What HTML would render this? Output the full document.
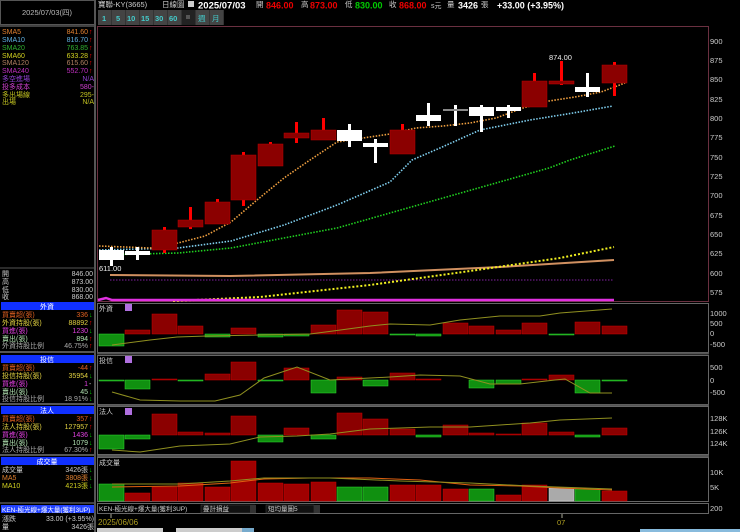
<!DOCTYPE html>
<html><head><meta charset="utf-8"><style>
html,body{margin:0;padding:0;background:#000;}
svg{display:block;font-family:"Liberation Sans","Noto Sans CJK TC",sans-serif;}
</style></head><body>
<svg width="740" height="532" viewBox="0 0 740 532" xmlns="http://www.w3.org/2000/svg">
<rect width="740" height="532" fill="#000"/>
<rect x="0.5" y="0.5" width="94" height="24" fill="none" stroke="#555"/>
<text x="47" y="15" font-size="7.5" fill="#bbb" text-anchor="middle">2025/07/03(四)</text>
<line x1="95" y1="0" x2="95" y2="532" stroke="#555" stroke-width="2"/>
<line x1="0" y1="26" x2="95" y2="26" stroke="#555" stroke-width="1.5"/>
<g font-size="7" >
<text x="2" y="34" fill="#e08030">SMA5</text><text x="88" y="34" fill="#e08030" text-anchor="end">841.60</text>
<text x="2" y="42" fill="#60b0e0">SMA10</text><text x="88" y="42" fill="#60b0e0" text-anchor="end">816.70</text>
<text x="2" y="50" fill="#30b030">SMA20</text><text x="88" y="50" fill="#30b030" text-anchor="end">763.85</text>
<text x="2" y="58" fill="#d0d020">SMA60</text><text x="88" y="58" fill="#d0d020" text-anchor="end">633.28</text>
<text x="2" y="65" fill="#b08060">SMA120</text><text x="88" y="65" fill="#b08060" text-anchor="end">615.60</text>
<text x="2" y="73" fill="#c030c0">SMA240</text><text x="88" y="73" fill="#c030c0" text-anchor="end">552.70</text>
<text x="2" y="81" fill="#9040d0">多空進場</text><text x="94" y="81" fill="#9040d0" text-anchor="end">N/A</text>
<text x="2" y="89" fill="#d040d0">投多成本</text><text x="94" y="89" fill="#d040d0" text-anchor="end">580-</text>
<text x="2" y="97" fill="#c0c020">多出場線</text><text x="94" y="97" fill="#c0c020" text-anchor="end">295-</text>
<text x="2" y="104" fill="#c0c020">出場</text><text x="94" y="104" fill="#c0c020" text-anchor="end">N/A</text>
</g>
<g fill="#f00" font-size="7"><text x="89" y="34">↑</text><text x="89" y="42">↑</text><text x="89" y="50">↑</text><text x="89" y="58">↑</text><text x="89" y="65">↑</text><text x="89" y="73">↑</text></g>
<line x1="0" y1="268" x2="95" y2="268" stroke="#555"/>
<g font-size="7" fill="#ccc">
<text x="2" y="276">開</text><text x="93" y="276" text-anchor="end">846.00</text>
<text x="2" y="284">高</text><text x="93" y="284" text-anchor="end">873.00</text>
<text x="2" y="292">低</text><text x="93" y="292" text-anchor="end">830.00</text>
<text x="2" y="299">收</text><text x="93" y="299" text-anchor="end">868.00</text>
</g>
<g font-size="7">
<rect x="1" y="302" width="93" height="8" fill="#1030ff"/><text x="47" y="309" fill="#fff" text-anchor="middle">外資</text>
<text x="2" y="317" fill="#e06020">買賣超(張)</text><text x="88" y="317" fill="#e06020" text-anchor="end">336</text><text x="89" y="317" fill="#0c0">↓</text>
<text x="2" y="325" fill="#e0d040">外資持股(張)</text><text x="88" y="325" fill="#e0d040" text-anchor="end">88892</text><text x="89" y="325" fill="#f00">↑</text>
<text x="2" y="333" fill="#e040e0">買進(張)</text><text x="88" y="333" fill="#e040e0" text-anchor="end">1230</text><text x="89" y="333" fill="#0c0">↓</text>
<text x="2" y="341" fill="#b0e0b0">賣出(張)</text><text x="88" y="341" fill="#b0e0b0" text-anchor="end">894</text><text x="89" y="341" fill="#f00">↑</text>
<text x="2" y="348" fill="#aaa">外資持股比例</text><text x="88" y="348" fill="#aaa" text-anchor="end">46.75%</text><text x="89" y="348" fill="#f00">↑</text>
<line x1="0" y1="352" x2="95" y2="352" stroke="#555" stroke-width="2"/>
<rect x="1" y="355" width="93" height="8" fill="#1030ff"/><text x="47" y="362" fill="#fff" text-anchor="middle">投信</text>
<text x="2" y="370" fill="#e06020">買賣超(張)</text><text x="88" y="370" fill="#e06020" text-anchor="end">-44</text><text x="89" y="370" fill="#f00">↑</text>
<text x="2" y="378" fill="#e0d040">投信持股(張)</text><text x="88" y="378" fill="#e0d040" text-anchor="end">35954</text><text x="89" y="378" fill="#0c0">↓</text>
<text x="2" y="386" fill="#e040e0">買進(張)</text><text x="88" y="386" fill="#e040e0" text-anchor="end">1</text><text x="89" y="386" fill="#ccc">-</text>
<text x="2" y="394" fill="#b0e0b0">賣出(張)</text><text x="88" y="394" fill="#b0e0b0" text-anchor="end">45</text><text x="89" y="394" fill="#0c0">↓</text>
<text x="2" y="401" fill="#aaa">投信持股比例</text><text x="88" y="401" fill="#aaa" text-anchor="end">18.91%</text><text x="89" y="401" fill="#0c0">↓</text>
<line x1="0" y1="404" x2="95" y2="404" stroke="#555" stroke-width="2"/>
<rect x="1" y="406" width="93" height="8" fill="#1030ff"/><text x="47" y="413" fill="#fff" text-anchor="middle">法人</text>
<text x="2" y="421" fill="#e06020">買賣超(張)</text><text x="88" y="421" fill="#e06020" text-anchor="end">357</text><text x="89" y="421" fill="#f00">↑</text>
<text x="2" y="429" fill="#e0d040">法人持股(張)</text><text x="88" y="429" fill="#e0d040" text-anchor="end">127957</text><text x="89" y="429" fill="#f00">↑</text>
<text x="2" y="437" fill="#e040e0">買進(張)</text><text x="88" y="437" fill="#e040e0" text-anchor="end">1436</text><text x="89" y="437" fill="#0c0">↓</text>
<text x="2" y="445" fill="#b0e0b0">賣出(張)</text><text x="88" y="445" fill="#b0e0b0" text-anchor="end">1079</text><text x="89" y="445" fill="#0c0">↓</text>
<text x="2" y="452" fill="#aaa">法人持股比例</text><text x="88" y="452" fill="#aaa" text-anchor="end">67.30%</text><text x="89" y="452" fill="#f00">↑</text>
<line x1="0" y1="455" x2="95" y2="455" stroke="#555" stroke-width="2"/>
<rect x="1" y="457" width="93" height="8" fill="#1030ff"/><text x="47" y="464" fill="#fff" text-anchor="middle">成交量</text>
<text x="2" y="472" fill="#ccc">成交量</text><text x="88" y="472" fill="#ccc" text-anchor="end">3426張</text><text x="89" y="472" fill="#0c0">↓</text>
<text x="2" y="480" fill="#e08030">MA5</text><text x="88" y="480" fill="#e08030" text-anchor="end">3808張</text><text x="89" y="480" fill="#0c0">↓</text>
<text x="2" y="488" fill="#d0d020">MA10</text><text x="88" y="488" fill="#d0d020" text-anchor="end">4213張</text><text x="89" y="488" fill="#0c0">↓</text>
<line x1="0" y1="503" x2="95" y2="503" stroke="#555" stroke-width="1.5"/>
<rect x="1" y="505" width="93" height="8" fill="#2040ff"/><text x="2" y="512" fill="#fff" font-size="6.5">KEN-極光線+爆大量(獲利3UP)</text>
<text x="2" y="521" fill="#ccc">漲跌</text><text x="94" y="521" fill="#ccc" text-anchor="end">33.00 (+3.95%)</text>
<text x="2" y="529" fill="#ccc">量</text><text x="94" y="529" fill="#ccc" text-anchor="end">3426張</text>
</g>
<g font-size="7.5">
<text x="98" y="7" fill="#ccc">寶聯-KY(3665)</text>
<text x="162" y="7" fill="#ccc">日線圖</text>
<rect x="188" y="1" width="6" height="6" fill="#ccc"/>
<text x="198" y="8.5" fill="#fff" font-weight="bold" font-size="9.5">2025/07/03</text>
<text x="256" y="7" fill="#ccc">開</text><text x="266" y="8.5" fill="#e00" font-weight="bold" font-size="9">846.00</text>
<text x="301" y="7" fill="#ccc">高</text><text x="310" y="8.5" fill="#e00" font-weight="bold" font-size="9">873.00</text>
<text x="345" y="7" fill="#ccc">低</text><text x="355" y="8.5" fill="#0c0" font-weight="bold" font-size="9">830.00</text>
<text x="389" y="7" fill="#ccc">收</text><text x="399" y="8.5" fill="#e00" font-weight="bold" font-size="9">868.00</text>
<text x="431" y="8" fill="#ccc" font-size="7">s元</text>
<text x="447" y="7" fill="#ccc">量</text><text x="458" y="8.5" fill="#fff" font-weight="bold" font-size="9">3426</text><text x="481" y="7" fill="#ccc">張</text>
<text x="497" y="8.5" fill="#fff" font-weight="bold" font-size="9">+33.00 (+3.95%)</text>
</g>
<g font-size="7.5" font-weight="bold" fill="#4cc">
<rect x="98" y="10" width="126" height="15" fill="#333"/>
<rect x="98" y="10" width="13" height="15" fill="#444"/><text x="102" y="21">1</text>
<rect x="112" y="10" width="13" height="15" fill="#444"/><text x="116" y="21">5</text>
<rect x="126" y="10" width="13" height="15" fill="#444"/><text x="127" y="21">10</text>
<rect x="140" y="10" width="13" height="15" fill="#444"/><text x="141" y="21">15</text>
<rect x="154" y="10" width="13" height="15" fill="#444"/><text x="155" y="21">30</text>
<rect x="168" y="10" width="13" height="15" fill="#444"/><text x="169" y="21">60</text>
<rect x="182" y="10" width="13" height="15" fill="#222"/><rect x="186" y="15" width="4" height="4" fill="#555"/>
<rect x="196" y="10" width="13" height="15" fill="#444"/><text x="198" y="21" font-weight="normal">週</text>
<rect x="210" y="10" width="13" height="15" fill="#444"/><text x="212" y="21" font-weight="normal">月</text>
</g>
<rect x="97.5" y="26.5" width="611" height="275" fill="none" stroke="#6a3040"/>
<g font-size="7.5" fill="#ccc">
<text x="710" y="44">900</text><text x="710" y="63">875</text><text x="710" y="82">850</text><text x="710" y="102">825</text><text x="710" y="121">800</text><text x="710" y="140">775</text><text x="710" y="160">750</text><text x="710" y="179">725</text><text x="710" y="198">700</text><text x="710" y="218">675</text><text x="710" y="237">650</text><text x="710" y="256">625</text><text x="710" y="276">600</text><text x="710" y="295">575</text>
</g>
<line x1="110" y1="280" x2="614" y2="280" stroke="#8020a0" stroke-width="1" stroke-dasharray="1.5,1.5"/>
<path d="M110 275 L230 276 L370 273 L500 267 L614 260" fill="none" stroke="#d09060" stroke-width="2"/>
<path d="M173 301 L260 297 L370 285 L470 271 L560 258 L614 247" fill="none" stroke="#f0f020" stroke-width="2" stroke-dasharray="2,2"/>
<path d="M98 300 L106 298 L112 300 L614 300" fill="none" stroke="#e030e0" stroke-width="2.5"/>
<path d="M99 255 L178 253 L231 248 L284 238 L337 228 L390 213 L443 198 L496 183 L549 168 L570 160 L615 146" fill="none" stroke="#20d020" stroke-width="1.6" stroke-dasharray="1.5,1.5"/>
<path d="M99 250 L178 248 L231 241 L284 225 L337 205 L390 182 L412 160 L440 148 L480 130 L530 120 L573 113 L613 106" fill="none" stroke="#80d0f0" stroke-width="1.6" stroke-dasharray="1.5,1.5"/>
<path d="M99 246 L150 248 L178 243 L205 236 L231 222 L257 200 L284 178 L310 160 L337 142 L363 138 L390 134 L416 128 L443 126 L470 123 L496 118 L523 108 L549 101 L575 97 L601 92 L625 83" fill="none" stroke="#f0a040" stroke-width="1.6" stroke-dasharray="1.5,1.5"/>
<g>
<rect x="110" y="247" width="3" height="19" fill="#fff"/><rect x="99" y="250" width="25" height="10" fill="#fff"/>
<rect x="136" y="247" width="3" height="13" fill="#fff"/><rect x="125" y="251" width="25" height="4" fill="#fff"/>
<rect x="163" y="227" width="3" height="26" fill="#f00"/><rect x="152" y="230" width="25" height="20" fill="#8b0000" stroke="#b00" stroke-width=".5"/>
<rect x="189" y="207" width="3" height="22" fill="#f00"/><rect x="178" y="220" width="25" height="7" fill="#8b0000" stroke="#b00" stroke-width=".5"/>
<rect x="216" y="199" width="3" height="25" fill="#f00"/><rect x="205" y="202" width="25" height="22" fill="#8b0000" stroke="#b00" stroke-width=".5"/>
<rect x="242" y="152" width="3" height="54" fill="#f00"/><rect x="231" y="155" width="25" height="45" fill="#8b0000" stroke="#b00" stroke-width=".5"/>
<rect x="269" y="142" width="3" height="24" fill="#f00"/><rect x="258" y="144" width="25" height="22" fill="#8b0000" stroke="#b00" stroke-width=".5"/>
<rect x="295" y="122" width="3" height="21" fill="#f00"/><rect x="284" y="133" width="25" height="5" fill="#8b0000" stroke="#b00" stroke-width=".5"/>
<rect x="322" y="118" width="3" height="22" fill="#f00"/><rect x="311" y="130" width="25" height="10" fill="#8b0000" stroke="#b00" stroke-width=".5"/>
<rect x="348" y="124" width="3" height="23" fill="#fff"/><rect x="337" y="130" width="25" height="11" fill="#fff"/>
<rect x="374" y="139" width="3" height="24" fill="#fff"/><rect x="363" y="143" width="25" height="4" fill="#fff"/>
<rect x="401" y="124" width="3" height="30" fill="#f00"/><rect x="390" y="130" width="25" height="24" fill="#8b0000" stroke="#b00" stroke-width=".5"/>
<rect x="427" y="103" width="3" height="23" fill="#fff"/><rect x="416" y="115" width="25" height="6" fill="#fff"/>
<rect x="454" y="105" width="3" height="21" fill="#fff"/><rect x="443" y="109" width="25" height="2" fill="#888"/>
<rect x="480" y="105" width="3" height="27" fill="#fff"/><rect x="469" y="107" width="25" height="9" fill="#fff"/>
<rect x="507" y="105" width="3" height="13" fill="#fff"/><rect x="496" y="107" width="25" height="4" fill="#fff"/>
<rect x="533" y="73" width="3" height="34" fill="#f00"/><rect x="522" y="81" width="25" height="26" fill="#8b0000" stroke="#b00" stroke-width=".5"/>
<rect x="560" y="61" width="3" height="24" fill="#f00"/><rect x="549" y="81" width="25" height="3" fill="#8b0000" stroke="#c00" stroke-width=".5"/>
<rect x="586" y="73" width="3" height="24" fill="#fff"/><rect x="575" y="87" width="25" height="5" fill="#fff"/>
<rect x="613" y="62" width="3" height="34" fill="#f00"/><rect x="602" y="65" width="25" height="18" fill="#8b0000" stroke="#b00" stroke-width=".5"/>
</g>
<text x="549" y="60" font-size="7.5" fill="#eee">874.00</text>
<text x="99" y="271" font-size="7.5" fill="#eee">611.00</text>

<rect x="97.5" y="303.5" width="611" height="49" fill="none" stroke="#666"/>
<line x1="97" y1="353.5" x2="709" y2="353.5" stroke="#555" stroke-width="2"/>
<text x="99" y="311" font-size="7" fill="#ccc">外資</text><rect x="125" y="304" width="7" height="7" fill="#b070e0"/>
<g fill="#8b0000" stroke="#c00" stroke-width=".5">
<rect x="125" y="330" width="25" height="4"/><rect x="152" y="314" width="25" height="20"/><rect x="178" y="326" width="25" height="8"/>
<rect x="231" y="328" width="25" height="6"/><rect x="311" y="325" width="25" height="9"/><rect x="337" y="310" width="25" height="24"/>
<rect x="363" y="312" width="25" height="22"/><rect x="443" y="323" width="25" height="11"/><rect x="469" y="326" width="25" height="8"/>
<rect x="496" y="330" width="25" height="4"/><rect x="522" y="323" width="25" height="11"/><rect x="575" y="322" width="25" height="12"/><rect x="602" y="326" width="25" height="8"/>
</g>
<g fill="#109010" stroke="#3d3" stroke-width=".5">
<rect x="99" y="334" width="25" height="12"/><rect x="205" y="334" width="25" height="3"/><rect x="258" y="334" width="25" height="3"/>
<rect x="284" y="334" width="25" height="2"/><rect x="390" y="334" width="25" height="1"/><rect x="416" y="334" width="25" height="2"/><rect x="549" y="334" width="25" height="1"/>
</g>
<path d="M112 345 L150 340 L177 337 L207 336 L310 334 L333 331 L370 326 L390 324 L430 325 L460 320 L500 316 L540 316 L560 313 L612 309" fill="none" stroke="#909020" stroke-width="1"/>
<g font-size="7.5" fill="#ccc"><text x="710" y="316">1000</text><text x="710" y="326">500</text><text x="710" y="336">0</text><text x="710" y="347">-500</text></g>

<rect x="97.5" y="355.5" width="611" height="49" fill="none" stroke="#666"/>
<line x1="97" y1="405.5" x2="709" y2="405.5" stroke="#555" stroke-width="2"/>
<text x="99" y="363" font-size="7" fill="#ccc">投信</text><rect x="125" y="356" width="7" height="7" fill="#b070e0"/>
<g fill="#8b0000" stroke="#c00" stroke-width=".5">
<rect x="152" y="379" width="25" height="1"/><rect x="205" y="374" width="25" height="6"/><rect x="231" y="362" width="25" height="18"/>
<rect x="284" y="368" width="25" height="12"/><rect x="337" y="377" width="25" height="3"/><rect x="390" y="373" width="25" height="7"/>
<rect x="416" y="379" width="25" height="1"/><rect x="522" y="379" width="25" height="1"/><rect x="549" y="375" width="25" height="5"/>
</g>
<g fill="#109010" stroke="#3d3" stroke-width=".5">
<rect x="99" y="380" width="25" height="1"/><rect x="125" y="380" width="25" height="9"/><rect x="178" y="380" width="25" height="1"/>
<rect x="258" y="380" width="25" height="1"/><rect x="311" y="380" width="25" height="13"/><rect x="363" y="380" width="25" height="6"/>
<rect x="469" y="380" width="25" height="8"/><rect x="496" y="380" width="25" height="4"/><rect x="575" y="380" width="25" height="13"/><rect x="602" y="380" width="25" height="1"/>
</g>
<path d="M112 392 L140 400 L180 401 L215 401 L240 395 L264 378 L297 367 L330 380 L370 378 L390 377 L420 375 L460 376 L490 384 L520 384 L555 380 L565 379 L590 393 L612 393" fill="none" stroke="#909020" stroke-width="1"/>
<g font-size="7.5" fill="#ccc"><text x="710" y="370">500</text><text x="710" y="383">0</text><text x="710" y="395">-500</text></g>

<rect x="97.5" y="406.5" width="611" height="48" fill="none" stroke="#666"/>
<line x1="97" y1="456" x2="709" y2="456" stroke="#555" stroke-width="2"/>
<text x="99" y="414" font-size="7" fill="#ccc">法人</text><rect x="125" y="408" width="7" height="7" fill="#b070e0"/>
<g fill="#8b0000" stroke="#c00" stroke-width=".5">
<rect x="152" y="414" width="25" height="21"/><rect x="178" y="432" width="25" height="3"/><rect x="205" y="433" width="25" height="2"/>
<rect x="231" y="416" width="25" height="19"/><rect x="284" y="428" width="25" height="7"/><rect x="337" y="413" width="25" height="22"/>
<rect x="363" y="419" width="25" height="16"/><rect x="390" y="429" width="25" height="6"/><rect x="443" y="425" width="25" height="10"/>
<rect x="469" y="433" width="25" height="2"/><rect x="496" y="434" width="25" height="1"/><rect x="522" y="423" width="25" height="12"/>
<rect x="549" y="432" width="25" height="3"/><rect x="602" y="428" width="25" height="7"/>
</g>
<g fill="#109010" stroke="#3d3" stroke-width=".5">
<rect x="99" y="435" width="25" height="14"/><rect x="125" y="435" width="25" height="4"/><rect x="258" y="435" width="25" height="7"/>
<rect x="311" y="435" width="25" height="4"/><rect x="416" y="435" width="25" height="2"/><rect x="575" y="435" width="25" height="2"/>
</g>
<path d="M112 450 L140 452 L180 446 L230 444 L260 437 L297 436 L330 434 L370 429 L400 428 L430 427 L470 427 L500 425 L530 423 L560 420 L612 418" fill="none" stroke="#909020" stroke-width="1"/>
<g font-size="7.5" fill="#ccc"><text x="710" y="421">128K</text><text x="710" y="434">126K</text><text x="710" y="446">124K</text></g>

<rect x="97.5" y="457.5" width="611" height="44" fill="none" stroke="#666"/>
<text x="99" y="465" font-size="7" fill="#ccc">成交量</text>
<g fill="#a00000" stroke="#c00" stroke-width=".5">
<rect x="125" y="493" width="25" height="8"/><rect x="152" y="487" width="25" height="14"/><rect x="178" y="483" width="25" height="18"/>
<rect x="205" y="487" width="25" height="14"/><rect x="231" y="461" width="25" height="40"/><rect x="258" y="483" width="25" height="18"/>
<rect x="284" y="484" width="25" height="17"/><rect x="311" y="482" width="25" height="19"/><rect x="390" y="485" width="25" height="16"/>
<rect x="416" y="485" width="25" height="16"/><rect x="443" y="489" width="25" height="12"/><rect x="496" y="495" width="25" height="6"/>
<rect x="522" y="485" width="25" height="16"/><rect x="602" y="491" width="25" height="10"/>
</g>
<g fill="#109010" stroke="#3d3" stroke-width=".5">
<rect x="99" y="484" width="25" height="17"/><rect x="337" y="487" width="25" height="14"/><rect x="363" y="487" width="25" height="14"/>
<rect x="469" y="489" width="25" height="12"/><rect x="575" y="489" width="25" height="12"/>
</g>
<rect x="549" y="488" width="25" height="13" fill="#aaa" stroke="#ddd" stroke-width=".5"/>
<path d="M112 487 L180 486 L230 483 L264 479 L310 478 L370 478 L420 480 L470 485 L520 486 L560 488 L612 490" fill="none" stroke="#e06010" stroke-width="1"/>
<path d="M112 484 L180 484 L230 481 L264 478 L330 478 L400 481 L470 483 L530 486 L612 489" fill="none" stroke="#909020" stroke-width="1"/>
<g font-size="7.5" fill="#ccc"><text x="710" y="475">10K</text><text x="710" y="490">5K</text><text x="710" y="511">200</text></g>

<rect x="97.5" y="503.5" width="611" height="10" fill="none" stroke="#666"/>
<text x="99" y="511" font-size="6.5" fill="#ccc">KEN-極光線+爆大量(獲利3UP)</text>
<rect x="201" y="505" width="54" height="8" fill="#111" stroke="#444" stroke-width=".5"/><text x="203" y="511" font-size="6.5" fill="#ccc">疊計損益</text>
<rect x="250" y="505" width="6" height="8" fill="#333"/>
<rect x="266" y="505" width="48" height="8" fill="#111" stroke="#444" stroke-width=".5"/><text x="268" y="511" font-size="6.5" fill="#ccc">短均量圖5</text>
<rect x="314" y="505" width="6" height="8" fill="#333"/>
<line x1="111" y1="514" x2="111" y2="518" stroke="#aa9" />
<text x="98" y="525" font-size="8" fill="#b0a020">2025/06/06</text>
<line x1="562" y1="514" x2="562" y2="518" stroke="#aa9"/>
<text x="557" y="525" font-size="7.5" fill="#b0a020">07</text>
<rect x="97" y="528" width="66" height="4" fill="#ccc"/><rect x="176" y="528" width="70" height="4" fill="#ccc"/><rect x="242" y="528" width="12" height="4" fill="#7ac"/>
<rect x="640" y="529" width="100" height="3" fill="#8bd"/>
</svg>
</body></html>
